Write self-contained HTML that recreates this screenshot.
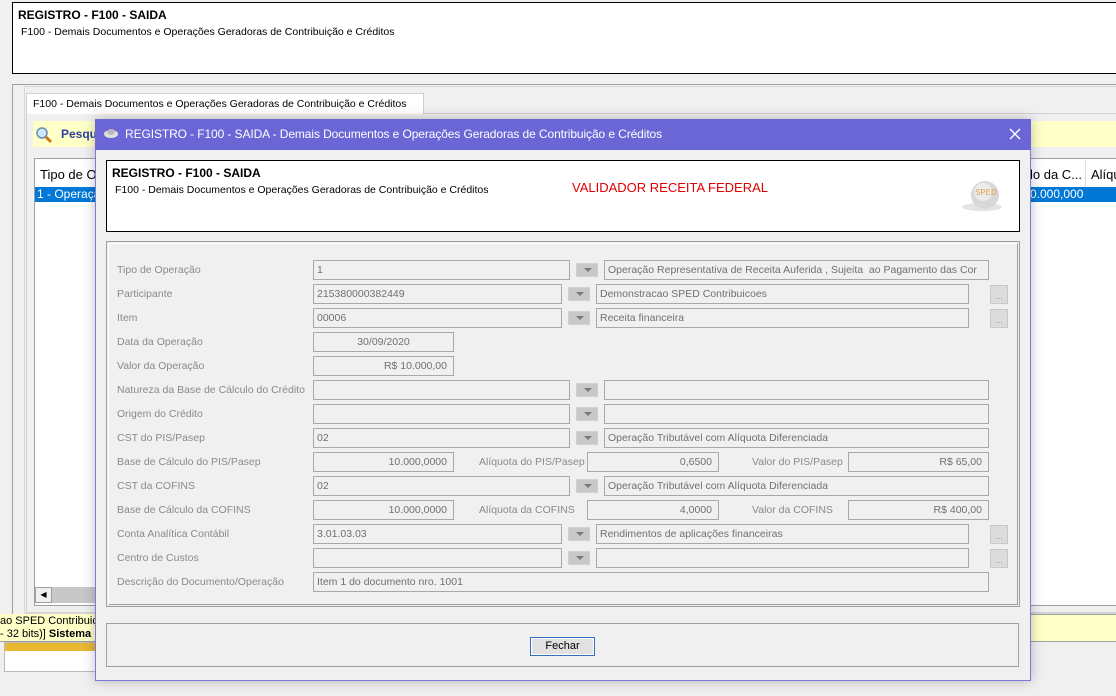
<!DOCTYPE html>
<html><head><meta charset="utf-8"><style>
*{margin:0;padding:0;box-sizing:border-box}
body{width:1116px;height:696px;background:#f0f0f0;font-family:"Liberation Sans",sans-serif;font-size:12px;position:relative;overflow:hidden;color:#000}
.a{position:absolute;white-space:nowrap}
.lbl{position:absolute;color:#8a8a8a;font-size:10.5px;white-space:nowrap;line-height:20px;margin-top:1px}
.f{position:absolute;height:20px;border:1px solid #a8a8a8;background:#f0f0f0;color:#707070;font-size:10.5px;line-height:18px;padding:0 3px;white-space:nowrap;overflow:hidden;margin-top:1px}
.r{text-align:right;padding-right:6px}
.c{text-align:center}
.dd{position:absolute;width:22px;height:14px;background:#c8c8c8;border:1px solid #d0d0d0;margin-top:1px}
.dd:after{content:"";position:absolute;left:7px;top:4px;border-left:4px solid transparent;border-right:4px solid transparent;border-top:4px solid #7a7a7a}
.el{position:absolute;width:18px;height:19px;background:#dcdcdc;border:1px solid #c8c8c8;color:#999;font-size:9px;text-align:center;line-height:20px;margin-top:1px}
</style></head><body>
<div class="a" style="left:12px;top:2px;width:1110px;height:72px;background:#fff;border:1px solid #000"></div>
<div class="a" style="left:18px;top:8px;font-weight:bold;font-size:12px">REGISTRO - F100 - SAIDA</div>
<div class="a" style="left:21px;top:26px;font-size:10.5px">F100 - Demais Documentos e Operações Geradoras de Contribuição e Créditos</div>
<div class="a" style="left:12px;top:84px;width:1110px;height:530px;border-left:1px solid #a0a0a0;border-top:1px solid #a0a0a0"></div>
<div class="a" style="left:24px;top:86px;width:1100px;height:528px;border:1px solid #d8d8d8"></div>
<div class="a" style="left:26px;top:113px;width:1095px;height:500px;border:1px solid #d0d0d0"></div>
<div class="a" style="left:26px;top:93px;width:398px;height:21px;background:#fff;border:1px solid #d0d0d0;border-bottom:none;font-size:10.5px;padding:4px 6px">F100 - Demais Documentos e Operações Geradoras de Contribuição e Créditos</div>
<div class="a" style="left:33px;top:121px;width:80px;height:26px;background:#ffffc8"></div>
<div class="a" style="left:1030px;top:121px;width:86px;height:26px;background:#ffffc8"></div>
<svg class="a" style="left:35px;top:126px" width="20" height="18"><circle cx="7" cy="7" r="5" fill="#cfe6ff" stroke="#6a8cb0" stroke-width="1.5"/><line x1="11" y1="11" x2="16" y2="16" stroke="#c87818" stroke-width="3"/></svg>
<div class="a" style="left:61px;top:127px;color:#3040a0;font-weight:bold;font-size:12px">Pesqu</div>
<div class="a" style="left:34px;top:158px;width:1090px;height:448px;background:#fff;border:1px solid #a0a0a0"></div>
<div class="a" style="left:40px;top:167px;font-size:13px">Tipo de Op</div>
<div class="a" style="left:1030px;top:167px;font-size:13px">lo da C...</div>
<div class="a" style="left:1085px;top:160px;width:1px;height:42px;background:#ddd"></div>
<div class="a" style="left:1091px;top:167px;font-size:13px">Alíqu</div>
<div class="a" style="left:35px;top:187px;width:62px;height:15px;background:#0078d7;color:#fff;font-size:12px;padding-left:2px;overflow:hidden">1 - Operaçã</div>
<div class="a" style="left:1030px;top:187px;width:86px;height:15px;background:#0078d7;color:#fff;font-size:12px"><span style="display:inline-block;width:53px;overflow:hidden">0.000,0000</span></div>
<div class="a" style="left:35px;top:587px;width:62px;height:16px;background:#c8c8c8"></div>
<div class="a" style="left:35px;top:587px;width:17px;height:16px;background:#f0f0f0;border:1px solid #a0a0a0;font-size:8px;text-align:center;line-height:14px">◀</div>
<div class="a" style="left:0;top:614px;width:96px;height:28px;background:#ffffc8;border-bottom:1px solid #a0a0a0;font-size:11px;line-height:13px;overflow:hidden;padding-top:1px">ao SPED Contribuico<br>- 32 bits)] <b>Sistema</b></div>
<div class="a" style="left:1030px;top:614px;width:86px;height:28px;background:#ffffc8;border-top:1px solid #a0a0a0;border-bottom:1px solid #a0a0a0"></div>
<div class="a" style="left:4px;top:642px;width:92px;height:30px;background:#fff;border:1px solid #bbb"><div style="height:8px;background:#e8b830"></div></div>
<div class="a" style="left:95px;top:119px;width:936px;height:562px;background:#f0f0f0;border:1px solid #7b78e0;box-shadow:0 0 12px rgba(0,0,0,0.25)"></div>
<div class="a" style="left:95px;top:119px;width:936px;height:31px;background:#6b66d6"></div>
<svg class="a" style="left:103px;top:127px" width="16" height="12"><ellipse cx="8" cy="7" rx="7" ry="4" fill="#e0e0e0"/><ellipse cx="8" cy="5" rx="4" ry="3" fill="#bbb"/></svg>
<div class="a" style="left:125px;top:127px;color:#fff;font-size:12px;letter-spacing:-0.1px">REGISTRO - F100 - SAIDA - Demais Documentos e Operações Geradoras de Contribuição e Créditos</div>
<svg class="a" style="left:1009px;top:128px" width="12" height="12"><path d="M1 1L11 11M11 1L1 11" stroke="#fff" stroke-width="1.4"/></svg>
<div class="a" style="left:106px;top:160px;width:914px;height:72px;background:#fff;border:1px solid #000"></div>
<div class="a" style="left:112px;top:166px;font-weight:bold">REGISTRO - F100 - SAIDA</div>
<div class="a" style="left:115px;top:184px;font-size:10.5px">F100 - Demais Documentos e Operações Geradoras de Contribuição e Créditos</div>
<div class="a" style="left:572px;top:180px;color:#e00000;font-size:13px">VALIDADOR RECEITA FEDERAL</div>
<svg class="a" style="left:960px;top:177px" width="50" height="36"><ellipse cx="22" cy="30" rx="20" ry="4" fill="#e4e4e4"/><circle cx="25" cy="18" r="14" fill="#d8d8d8"/><circle cx="23" cy="15" r="9" fill="#ececec"/><text x="15" y="18" font-size="8" fill="#e0a050" font-family="Liberation Sans">SPED</text></svg>
<div class="a" style="left:106px;top:241px;width:914px;height:366px;border:1px solid #a0a0a0"></div>
<div class="a" style="left:108px;top:243px;width:910px;height:362px;border:1px solid #a0a0a0;border-top-color:#fff;border-left-color:#fff"></div>

<div class="lbl" style="left:117px;top:259px">Tipo de Operação</div>
<div class="f" style="left:313px;top:259px;width:257px">1</div><div class="dd" style="left:576px;top:262px"></div>
<div class="f" style="left:604px;top:259px;width:385px">Operação Representativa de Receita Auferida , Sujeita &nbsp;ao Pagamento das Cor</div>

<div class="lbl" style="left:117px;top:283px">Participante</div>
<div class="f" style="left:313px;top:283px;width:249px">215380000382449</div><div class="dd" style="left:568px;top:286px"></div>
<div class="f" style="left:596px;top:283px;width:373px">Demonstracao SPED Contribuicoes</div><div class="el" style="left:990px;top:284px">...</div>

<div class="lbl" style="left:117px;top:307px">Item</div>
<div class="f" style="left:313px;top:307px;width:249px">00006</div><div class="dd" style="left:568px;top:310px"></div>
<div class="f" style="left:596px;top:307px;width:373px">Receita financeira</div><div class="el" style="left:990px;top:308px">...</div>

<div class="lbl" style="left:117px;top:331px">Data da Operação</div>
<div class="f c" style="left:313px;top:331px;width:141px">30/09/2020</div>

<div class="lbl" style="left:117px;top:355px">Valor da Operação</div>
<div class="f r" style="left:313px;top:355px;width:141px">R$ 10.000,00</div>

<div class="lbl" style="left:117px;top:379px">Natureza da Base de Cálculo do Crédito</div>
<div class="f" style="left:313px;top:379px;width:257px"></div><div class="dd" style="left:576px;top:382px"></div>
<div class="f" style="left:604px;top:379px;width:385px"></div>

<div class="lbl" style="left:117px;top:403px">Origem do Crédito</div>
<div class="f" style="left:313px;top:403px;width:257px"></div><div class="dd" style="left:576px;top:406px"></div>
<div class="f" style="left:604px;top:403px;width:385px"></div>

<div class="lbl" style="left:117px;top:427px">CST do PIS/Pasep</div>
<div class="f" style="left:313px;top:427px;width:257px">02</div><div class="dd" style="left:576px;top:430px"></div>
<div class="f" style="left:604px;top:427px;width:385px">Operação Tributável com Alíquota Diferenciada</div>

<div class="lbl" style="left:117px;top:451px">Base de Cálculo do PIS/Pasep</div>
<div class="f r" style="left:313px;top:451px;width:141px">10.000,0000</div>
<div class="lbl" style="left:479px;top:451px">Alíquota do PIS/Pasep</div>
<div class="f r" style="left:587px;top:451px;width:132px">0,6500</div>
<div class="lbl" style="left:752px;top:451px">Valor do PIS/Pasep</div>
<div class="f r" style="left:848px;top:451px;width:141px">R$ 65,00</div>

<div class="lbl" style="left:117px;top:475px">CST da COFINS</div>
<div class="f" style="left:313px;top:475px;width:257px">02</div><div class="dd" style="left:576px;top:478px"></div>
<div class="f" style="left:604px;top:475px;width:385px">Operação Tributável com Alíquota Diferenciada</div>

<div class="lbl" style="left:117px;top:499px">Base de Cálculo da COFINS</div>
<div class="f r" style="left:313px;top:499px;width:141px">10.000,0000</div>
<div class="lbl" style="left:479px;top:499px">Alíquota da COFINS</div>
<div class="f r" style="left:587px;top:499px;width:132px">4,0000</div>
<div class="lbl" style="left:752px;top:499px">Valor da COFINS</div>
<div class="f r" style="left:848px;top:499px;width:141px">R$ 400,00</div>

<div class="lbl" style="left:117px;top:523px">Conta Analítica Contábil</div>
<div class="f" style="left:313px;top:523px;width:249px">3.01.03.03</div><div class="dd" style="left:568px;top:526px"></div>
<div class="f" style="left:596px;top:523px;width:373px">Rendimentos de aplicações financeiras</div><div class="el" style="left:990px;top:524px">...</div>

<div class="lbl" style="left:117px;top:547px">Centro de Custos</div>
<div class="f" style="left:313px;top:547px;width:249px"></div><div class="dd" style="left:568px;top:550px"></div>
<div class="f" style="left:596px;top:547px;width:373px"></div><div class="el" style="left:990px;top:548px">...</div>

<div class="lbl" style="left:117px;top:571px">Descrição do Documento/Operação</div>
<div class="f" style="left:313px;top:571px;width:676px">Item 1 do documento nro. 1001</div>

<div class="a" style="left:106px;top:623px;width:913px;height:44px;border:1px solid #a0a0a0"></div>
<div class="a" style="left:530px;top:637px;width:65px;height:19px;background:#e1e1e1;border:1px solid #3070c0;box-shadow:inset 0 0 0 1px #fff;font-size:11px;text-align:center;line-height:17px">Fechar</div>
</body></html>
